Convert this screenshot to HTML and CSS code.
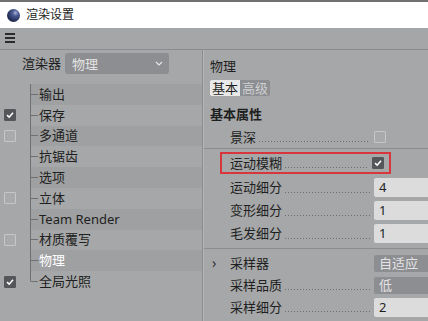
FILE: index.html
```html
<!DOCTYPE html>
<html lang="zh">
<head>
  <meta charset="UTF-8" />
  <title>渲染设置</title>
  <link rel="stylesheet" href="styles.css">
</head>
<body>
  <div class="window">
    <div class="titlebar">
      <span class="app-icon"></span>
      <span class="title">渲染设置</span>
    </div>

    <div class="menubar">
      <span class="burger"><i></i><i></i><i></i></span>
    </div>

    <div class="main">
      <!-- 左侧：渲染器与树 -->
      <div class="side">
        <div class="renderer">
          <span class="renderer-label">渲染器</span>
          <div class="select">
            <span>物理</span>
            <svg width="8" height="5" viewBox="0 0 8 5"><path d="M1 1 L4 4 L7 1" fill="none" stroke="#e6e6e6" stroke-width="1.2"/></svg>
          </div>
        </div>

        <ul class="tree">
          <li class="item"><span class="cell"></span><span class="node">输出</span></li>
          <li class="item"><span class="cell"><span class="check on"></span></span><span class="node">保存</span></li>
          <li class="item"><span class="cell"><span class="check"></span></span><span class="node">多通道</span></li>
          <li class="item"><span class="cell"></span><span class="node">抗锯齿</span></li>
          <li class="item"><span class="cell"></span><span class="node">选项</span></li>
          <li class="item"><span class="cell"><span class="check"></span></span><span class="node">立体</span></li>
          <li class="item"><span class="cell"></span><span class="node">Team Render</span></li>
          <li class="item"><span class="cell"><span class="check"></span></span><span class="node">材质覆写</span></li>
          <li class="item selected"><span class="cell"></span><span class="node">物理</span></li>
          <li class="item last"><span class="cell"><span class="check on"></span></span><span class="node">全局光照</span></li>
        </ul>
      </div>

      <!-- 右侧：属性 -->
      <div class="panel">
        <div class="panel-title">物理</div>
        <div class="tabs">
          <span class="tab active">基本</span>
          <span class="tab">高级</span>
        </div>
        <div class="group-title">基本属性</div>

        <div class="prop first">
          <span class="label">景深</span><span class="dots"></span>
          <span class="value"><span class="check"></span></span>
        </div>
        <div class="sep"></div>

        <div class="prop highlight">
          <span class="label">运动模糊</span><span class="dots"></span>
          <span class="value"><span class="check on"></span></span>
        </div>
        <div class="prop num first-num">
          <span class="label">运动细分</span><span class="dots"></span>
          <span class="value"><span class="input">4</span></span>
        </div>
        <div class="prop num">
          <span class="label">变形细分</span><span class="dots"></span>
          <span class="value"><span class="input">1</span></span>
        </div>
        <div class="prop num">
          <span class="label">毛发细分</span><span class="dots"></span>
          <span class="value"><span class="input">1</span></span>
        </div>
        <div class="sep"></div>

        <div class="prop sample first-sample">
          <span class="arrow">›</span>
          <span class="label">采样器</span><span class="gap"></span>
          <span class="value"><span class="dropdown">自适应</span></span>
        </div>
        <div class="prop sample">
          <span class="label">采样品质</span><span class="dots"></span>
          <span class="value"><span class="dropdown">低</span></span>
        </div>
        <div class="prop sample">
          <span class="label">采样细分</span><span class="dots"></span>
          <span class="value"><span class="input">2</span></span>
        </div>
      </div>
    </div>
  </div>
</body>
</html>
```

FILE: styles.css
```css
* {
  box-sizing: border-box;
  margin: 0;
  padding: 0;
}

body {
  font-family: 'Noto Sans', 'Noto Sans CJK SC', sans-serif;
  font-size: 13px;
  color: #1e1f21;
  background: #a6a7a9;
}

.window {
  width: 428px;
  height: 321px;
  overflow: hidden;
  background: #a6a7a9;
}

/* 标题栏 */
.titlebar {
  height: 28px;
  border-top: 2px solid #707070;
  background: #ffffff;
  display: flex;
  align-items: center;
  padding-left: 7px;
  gap: 6px;
}

.app-icon {
  width: 13px;
  height: 13px;
  border-radius: 50%;
  background: radial-gradient(circle at 65% 30%, #aab4d6 0, #4a5a92 25%, #1f2a52 70%, #121a36 100%);
}

.title {
  font-size: 12px;
  color: #222;
  line-height: 1;
}

.menubar {
  height: 22px;
  border-bottom: 1px solid #8b8c8e;
  padding: 5px 0 0 5px;
  background: #a5a6a8;
}

.burger {
  display: flex;
  flex-direction: column;
  gap: 2px;
  width: 10px;
}

.burger i {
  display: block;
  height: 2px;
  background: #2a2b2d;
}

.main {
  display: flex;
  height: 271px;
}

/* 左侧 */
.side {
  width: 203px;
  border-right: 1px solid #8c8d8f;
}

.renderer {
  display: flex;
  align-items: center;
  height: 21px;
  margin-top: 3px;
  padding-left: 22px;
  gap: 4px;
}

.renderer-label {
  line-height: 21px;
}

.select {
  width: 104px;
  height: 21px;
  border-radius: 3px;
  background: #8d8e91;
  color: #e4e4e4;
  display: flex;
  align-items: center;
  justify-content: space-between;
  padding: 0 6px 0 7px;
}

.tree {
  list-style: none;
  margin-top: 10px;
}

.item {
  display: flex;
  height: 20.8px;
}

.cell {
  width: 30px;
  display: flex;
  align-items: center;
  padding-left: 4px;
}

.node {
  flex: 1;
  display: flex;
  align-items: center;
  line-height: 1;
  background: linear-gradient(#6f7073, #6f7073) no-repeat 0 0 / 1px 100%;
}

.node::before {
  content: '';
  width: 7px;
  height: 1px;
  margin-left: 1px;
  margin-right: 1px;
  background: #6f7073;
}

.item:nth-child(odd) .node {
  background-color: #9fa0a2;
}

.item.last .node {
  background-size: 1px 50%;
}

.item.selected .node {
  color: #ffffff;
}

/* 复选框 */
.check {
  display: block;
  width: 12px;
  height: 12px;
  border: 1px solid #c6c7c9;
  border-radius: 1px;
  background: #a9aaac;
}

.check.on {
  border-color: #55565a;
  background: #55565a url("data:image/svg+xml,%3Csvg xmlns='http://www.w3.org/2000/svg' width='10' height='10' viewBox='0 0 10 10'%3E%3Cpath d='M2 5.2 L4.2 7.2 L8 2.8' fill='none' stroke='white' stroke-width='1.6'/%3E%3C/svg%3E") no-repeat center;
}

/* 右侧 */
.panel {
  flex: 1;
  border-left: 1px solid #b3b4b6;
  overflow: hidden;
}

.panel-title {
  margin-top: 6px;
  height: 20px;
  line-height: 20px;
  padding-left: 6px;
}

.tabs {
  display: flex;
  margin-top: 4px;
  margin-left: 6px;
  height: 16px;
}

.tab {
  width: 30px;
  line-height: 16px;
  text-align: center;
  background: #8d8e91;
  color: #cfd0d2;
  border-radius: 0 2px 2px 0;
}

.tab.active {
  background: #e9e9e9;
  color: #1e1f21;
  border-radius: 2px 0 0 2px;
}

.group-title {
  margin-top: 8px;
  height: 20px;
  line-height: 20px;
  padding-left: 6px;
  font-weight: bold;
}

.prop {
  display: flex;
  align-items: center;
  height: 22px;
  padding-left: 26px;
}

.prop.first {
  margin-top: 2px;
}

.prop.num {
  height: 23px;
}

.prop.first-num {
  margin-top: 2px;
}

.label {
  line-height: 1;
  white-space: nowrap;
}

.dots {
  flex: 1;
  height: 1px;
  margin: 9px 4px 0 3px;
  background: linear-gradient(to right, #6c6d70 1px, transparent 1px) repeat-x 0 0 / 3px 1px;
}

.gap {
  flex: 1;
}

.value {
  width: 54px;
  display: flex;
  align-items: center;
}

.sep {
  height: 1px;
  background: #8b8c8e;
}

.prop.num + .sep {
  margin-top: 3px;
}

.highlight {
  margin-top: 3px;
  margin-left: 16px;
  width: 171px;
  border: 2px solid #d8353d;
  padding-left: 8px;
}

.highlight .value {
  width: 17px;
}

.input {
  width: 54px;
  height: 19px;
  line-height: 19px;
  padding-left: 5px;
  background: #dcdcdd;
  border-radius: 2px 0 0 2px;
  color: #1e1f21;
}

.dropdown {
  width: 54px;
  height: 17px;
  line-height: 17px;
  padding-left: 5px;
  background: #8d8e91;
  color: #e2e2e4;
  border-radius: 2px 0 0 2px;
}

.first-sample {
  margin-top: 3px;
}

.arrow {
  width: 0;
  margin-left: -18px;
  margin-right: 18px;
  color: #333;
  font-size: 14px;
  line-height: 1;
}
```
